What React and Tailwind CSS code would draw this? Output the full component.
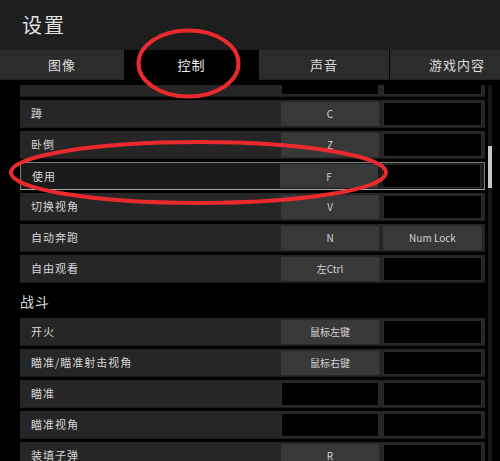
import React from 'react';

const font = { fontFamily: '"Noto Sans CJK SC", "Noto Sans", sans-serif' };

const tabs = [
    { label: '图像', w: 'w-[124px]' },
    { label: '控制', w: 'w-[133px]', active: true },
    { label: '声音', w: 'w-[130px]' },
    { label: '游戏内容', w: 'w-[134px]' },
];

const moveRows = [
    { label: '', k1: '', k2: '' },
    { label: '蹲', k1: 'C', k2: '' },
    { label: '卧倒', k1: 'Z', k2: '' },
    { label: '使用', k1: 'F', k2: '', selected: true },
    { label: '切换视角', k1: 'V', k2: '' },
    { label: '自动奔跑', k1: 'N', k2: 'Num Lock' },
    { label: '自由观看', k1: '左Ctrl', k2: '' },
];

const combatRows = [
    { label: '开火', k1: '鼠标左键', k2: '' },
    { label: '瞄准/瞄准射击视角', k1: '鼠标右键', k2: '' },
    { label: '瞄准', k1: '', k2: '' },
    { label: '瞄准视角', k1: '', k2: '' },
    { label: '装填子弹', k1: 'R', k2: '' },
];

function KeyBox({ value, wide }) {
    return (
        <div
            className={`h-[24px] ${wide ? 'w-[99px]' : 'w-[98px]'} flex items-center justify-center text-[10px] text-[#d4d4d4] ${value ? 'bg-[#383838]' : 'bg-black border border-[#2a2a2a]'}`}
        >
            {value}
        </div>
    );
}

function BindRow({ row }) {
    return (
        <div
            className={`h-[28px] flex items-center ${row.selected ? 'bg-[#1b1b1b] border border-[#7d7d7d] border-b-[#a8a8a8]' : 'bg-[#262626] border-b border-[#1c1c1c]'}`}
        >
            <div className="flex-1 pl-[11px] text-[11px] text-[#d6d6d6] tracking-[1px]">{row.label}</div>
            <div className="flex items-center gap-[4px] pr-[3px]">
                <KeyBox value={row.k1} />
                <KeyBox value={row.k2} wide />
            </div>
        </div>
    );
}

export default function App() {
    return (
        <div className="relative w-[500px] h-[461px] bg-black overflow-hidden" style={font}>
            <div className="h-[50px] bg-[#1e1e1e] flex items-center pl-[22px] text-[20px] text-[#e2e2e2] tracking-[2px]">
                设置
            </div>

            <div className="h-[30px] flex gap-[1px] bg-black overflow-hidden">
                {tabs.map((t) => (
                    <div
                        key={t.label}
                        className={`${t.w} shrink-0 flex items-center justify-center text-[13px] tracking-[1px] ${t.active ? 'bg-black text-[#f0f0f0]' : 'bg-[#2c2c2c] text-[#dcdcdc] border-b border-[#222]'}`}
                    >
                        {t.label}
                    </div>
                ))}
            </div>

            <div className="flex">
                <div className="w-[488px] h-[376px] mt-[5px] pl-[20px] pr-[3px] overflow-hidden">
                    <div className="-mt-[16px] flex flex-col gap-[3px]">
                        {moveRows.map((r, i) => (
                            <BindRow key={i} row={r} />
                        ))}
                        <div className="h-[29px] flex items-center text-[14px] text-[#d8d8d8] tracking-[1px] pt-[2px]">
                            战斗
                        </div>
                        {combatRows.map((r, i) => (
                            <BindRow key={i} row={r} />
                        ))}
                    </div>
                </div>
                <div className="w-[4px] mt-[5px] h-[376px] bg-[#161616] pt-[61px]">
                    <div className="h-[42px] bg-[#c8c8c8]" />
                </div>
            </div>

            <svg className="absolute inset-0 pointer-events-none" width="500" height="461">
                <ellipse cx="188.5" cy="63.5" rx="50" ry="33" fill="none" stroke="#ea2a2e" strokeWidth="4" />
                <ellipse cx="198.5" cy="172.5" rx="187.5" ry="30.5" fill="none" stroke="#ea2a2e" strokeWidth="4" />
            </svg>
        </div>
    );
}
